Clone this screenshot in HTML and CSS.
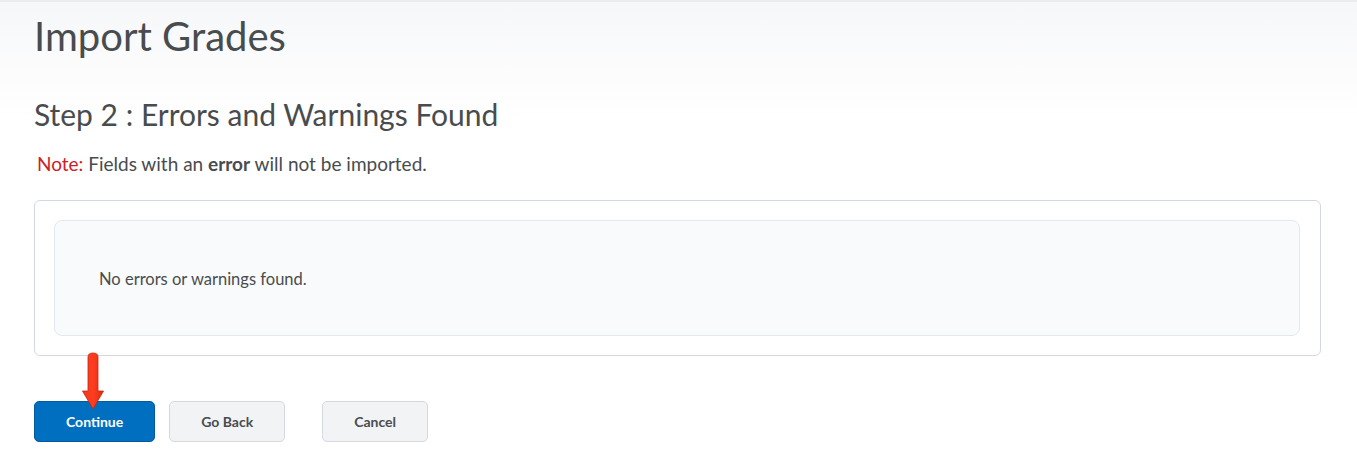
FILE: index.html
```html
<!DOCTYPE html>
<html>
<head>
    <meta charset="UTF-8">
    <meta name="viewport" content="width=device-width, initial-scale=1.0">
    <title>Import Grades</title>
    <link rel="stylesheet" href="styles.css">
</head>
<body>
    <div class="page">
        <h1>Import Grades</h1>
        <h2>Step 2 : Errors and Warnings Found</h2>
        <p class="note"><span class="note-label">Note:</span> Fields with an <b>error</b> will not be imported.</p>
        <div class="results">
            <div class="results-inner">No errors or warnings found.</div>
        </div>
        <div class="actions">
            <div class="primary-wrap">
                <button class="btn btn-primary">Continue</button>
                <svg class="arrow" width="24" height="58" viewBox="0 0 24 58">
                    <defs>
                        <linearGradient id="ar" x1="0" x2="1" y1="0" y2="0">
                            <stop offset="0" stop-color="#f23a1f"/>
                            <stop offset="0.5" stop-color="#ff3d1e"/>
                            <stop offset="1" stop-color="#d92b15"/>
                        </linearGradient>
                    </defs>
                    <path d="M7 5 Q7 1 12 1 Q17 1 17 5 L17 39 L22.5 39 L12 57 L1.5 39 L7 39 Z" fill="url(#ar)" stroke="#c42612" stroke-width="0.8"/>
                </svg>
            </div>
            <button class="btn">Go Back</button>
            <button class="btn btn-cancel">Cancel</button>
        </div>
    </div>
</body>
</html>
```

FILE: styles.css
```css
body {
    margin: 0;
    font-family: Lato, "Open Sans", sans-serif;
    color: #494c4e;
    border-top: 2px solid #ebecee;
    background: linear-gradient(#f6f7f9, #ffffff 120px) no-repeat;
    min-height: 465px;
}
.page {
    padding: 10px 36px 0 34px;
}
h1 {
    margin: 0;
    font-size: 40px;
    line-height: 48px;
    font-weight: normal;
}
h2 {
    margin: 36px 0 0;
    font-size: 30px;
    line-height: 36px;
    font-weight: normal;
}
.note {
    margin: 18px 0 0 3px;
    font-size: 19px;
    line-height: 28px;
}
.note-label {
    color: #cd2026;
}
.note b {
    font-weight: bold;
}
.results {
    margin-top: 22px;
    border: 1px solid #d3d9e3;
    border-radius: 6px;
    padding: 19px 20px 19px 19px;
    background: #fff;
}
.results-inner {
    background: #f9fafb;
    border: 1px solid #e3e9f1;
    border-radius: 8px;
    padding: 46px 44px 44px;
    font-size: 16.5px;
    line-height: 24px;
}
.actions {
    display: flex;
    margin-top: 45px;
    gap: 14px;
}
.primary-wrap {
    position: relative;
}
.btn {
    height: 41px;
    padding: 0 31px;
    font-family: Lato, "Open Sans", sans-serif;
    font-size: 14px;
    font-weight: bold;
    color: #494c4e;
    background-color: #f1f3f5;
    border: 1px solid #d3d9e3;
    border-radius: 5px;
    cursor: pointer;
}
.btn-primary {
    color: #fff;
    background-color: #006fbf;
    border-color: #005ca0;
}
.btn-cancel {
    margin-left: 23px;
}
.arrow {
    position: absolute;
    left: 47px;
    top: -49px;
}
```
